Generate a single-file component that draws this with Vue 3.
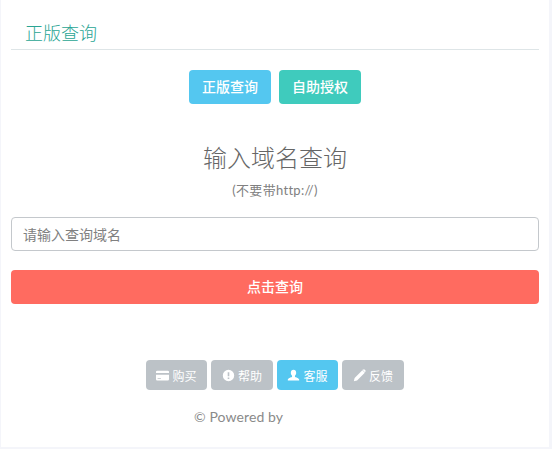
<template>
  <div class="page">
    <div class="panel">
      <div class="head"><span>正版查询</span></div>
      <div class="tabs">
        <a class="btn tab info">正版查询</a>
        <a class="btn tab teal">自助授权</a>
      </div>
      <h2 class="title">输入域名查询</h2>
      <p class="hint">(不要带http://)</p>
      <input class="field" type="text" placeholder="请输入查询域名" />
      <button class="submit">点击查询</button>
      <div class="links">
        <a class="btn link">
          <svg viewBox="0 0 16 16"><path d="M1.500 2h13A1.500 1.500 0 0 1 16 3.500V5H0V3.500A1.500 1.500 0 0 1 1.500 2zM0 7h16v5.500a1.500 1.500 0 0 1-1.500 1.500h-13A1.500 1.500 0 0 1 0 12.500zm2 4v1h4v-1z" fill-rule="evenodd"/></svg>
          购买
        </a>
        <a class="btn link">
          <svg viewBox="0 0 16 16"><path d="M8 1a7 7 0 1 1 0 14A7 7 0 0 1 8 1zM7 4v5h2V4zm0 6.500v1.800h2v-1.800z" fill-rule="evenodd"/></svg>
          帮助
        </a>
        <a class="btn link on">
          <svg viewBox="0 0 16 16"><path d="M8 1c2 0 3.300 1.500 3.300 3.700 0 1.500-.6 2.800-1.500 3.600v1.300c0 .6 4.700 1.200 5.200 3.400v1H1v-1c.5-2.200 5.200-2.800 5.200-3.400V8.300C5.300 7.500 4.700 6.200 4.700 4.700 4.700 2.500 6 1 8 1z"/></svg>
          客服
        </a>
        <a class="btn link">
          <svg viewBox="0 0 16 16"><path d="M11.500 1.500l3 3L5 14l-4 1 1-4zM12.800.6l1.000-.3 1.900 1.900-.3 1.000-.8.8-3-3z"/></svg>
          反馈
        </a>
      </div>
      <p class="foot">© Powered by</p>
    </div>
  </div>
</template>

<script setup>
</script>

<style>
html,
body {
  margin: 0;
  background: #f4f5fa;
}
</style>

<style scoped>
.page {
  width: 552px;
  height: 449px;
  overflow: hidden;
  font-family: "Lato", "Noto Sans CJK SC", sans-serif;
}

.panel {
  width: 548px;
  height: 447px;
  margin-left: 1px;
  padding: 0 10px;
  box-sizing: border-box;
  background: #fff;
  display: flex;
  flex-direction: column;
  align-items: center;
}

.head {
  align-self: stretch;
  height: 50px;
  box-sizing: border-box;
  padding: 21px 14px 0;
  border-bottom: 1px solid #dee5e7;
  font-size: 18px;
  line-height: 24px;
  font-weight: 300;
  color: #2aa594;
}

.btn {
  display: flex;
  align-items: center;
  justify-content: center;
  box-sizing: border-box;
  color: #fff;
  border-radius: 4px;
}

.tabs {
  display: flex;
  gap: 8px;
  margin-top: 20px;
}

.tab {
  width: 82px;
  height: 34px;
  padding-bottom: 2px;
  font-size: 14px;
  font-weight: 500;
}

.info {
  background: #54c7f0;
}

.teal {
  background: #3fcbbd;
}

.title {
  margin: 38px 0 0;
  font-size: 24px;
  line-height: 32px;
  font-weight: 300;
  color: #666;
}

.hint {
  margin: 7px 0 0;
  font-size: 13px;
  line-height: 18px;
  font-weight: 400;
  letter-spacing: 0.3px;
  color: #808080;
}

.field {
  align-self: stretch;
  height: 34px;
  margin-top: 18px;
  padding: 0 11px;
  box-sizing: border-box;
  border: 1px solid #c4c8cc;
  border-radius: 4px;
  outline: none;
  font-family: inherit;
  font-size: 14px;
  font-weight: 400;
  color: #555;
}

.field::placeholder {
  color: #808080;
  opacity: 1;
}

.submit {
  align-self: stretch;
  height: 34px;
  margin-top: 19px;
  padding: 0 0 2px;
  border: 0;
  border-radius: 4px;
  background: #ff6b60;
  color: #fff;
  font-family: inherit;
  font-size: 14px;
  font-weight: 500;
}

.links {
  display: flex;
  gap: 4px;
  margin-top: 56px;
}

.link {
  gap: 3px;
  width: 61px;
  height: 30px;
  background: #bcc2c7;
  font-size: 12px;
}

.link:nth-child(even) {
  width: 62px;
}

.link svg {
  width: 13px;
  height: 13px;
  fill: #fff;
}

.link.on {
  background: #54c7f0;
}

.foot {
  align-self: flex-start;
  margin: 18px 0 0 183px;
  font-size: 14px;
  line-height: 18px;
  font-weight: 400;
  letter-spacing: 0.1px;
  color: #8a8a8a;
}
</style>
